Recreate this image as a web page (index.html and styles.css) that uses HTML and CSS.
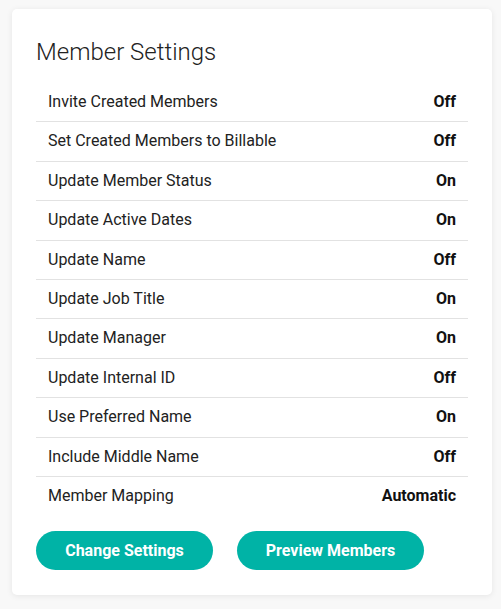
FILE: index.html
```html
<!DOCTYPE html>
<html>
<head>
<meta charset="utf-8">
<link rel="stylesheet" href="styles.css">
</head>
<body>
<div class="card">
  <h2 class="title">Member Settings</h2>
  <div class="rows">
    <div class="row"><span>Invite Created Members</span><b>Off</b></div>
    <div class="row"><span>Set Created Members to Billable</span><b>Off</b></div>
    <div class="row"><span>Update Member Status</span><b>On</b></div>
    <div class="row"><span>Update Active Dates</span><b>On</b></div>
    <div class="row"><span>Update Name</span><b>Off</b></div>
    <div class="row"><span>Update Job Title</span><b>On</b></div>
    <div class="row"><span>Update Manager</span><b>On</b></div>
    <div class="row"><span>Update Internal ID</span><b>Off</b></div>
    <div class="row"><span>Use Preferred Name</span><b>On</b></div>
    <div class="row"><span>Include Middle Name</span><b>Off</b></div>
    <div class="row last"><span>Member Mapping</span><b>Automatic</b></div>
  </div>
  <div class="actions">
    <button class="btn btn-change">Change Settings</button>
    <button class="btn btn-preview">Preview Members</button>
  </div>
</div>
</body>
</html>
```
FILE: styles.css
```css
html, body {
  margin: 0;
  padding: 0;
  background: #f8f8f8;
}
body {
  padding: 9px 9px 14px 12px;
  font-family: Roboto, "Liberation Sans", sans-serif;
  color: #222;
}
.card {
  width: 480px;
  height: 586px;
  box-sizing: border-box;
  background: #fff;
  border-radius: 5px;
  box-shadow: 0 1px 6px rgba(0,0,0,0.08);
  padding: 29px 24px 0 24px;
}
.title {
  margin: 0 0 17px 0;
  font-weight: 300;
  font-size: 24px;
  line-height: 28px;
  color: #222;
}
.rows {
  display: flex;
  flex-direction: column;
}
.row {
  display: flex;
  justify-content: space-between;
  align-items: center;
  padding: 10px 12px;
  font-size: 16px;
  line-height: 18.4px;
  border-bottom: 1px solid #e2e2e2;
}
.row.last {
  border-bottom: none;
}
.row b {
  font-weight: 700;
  color: #111;
}
.actions {
  display: flex;
  gap: 24px;
  margin-top: 16px;
}
.btn {
  height: 39px;
  border: none;
  border-radius: 20px;
  background: #00b3a6;
  color: #fff;
  font-family: Roboto, "Liberation Sans", sans-serif;
  font-weight: 700;
  font-size: 16px;
  padding: 0;
}
.btn-change { width: 177px; }
.btn-preview { width: 187px; }
```
